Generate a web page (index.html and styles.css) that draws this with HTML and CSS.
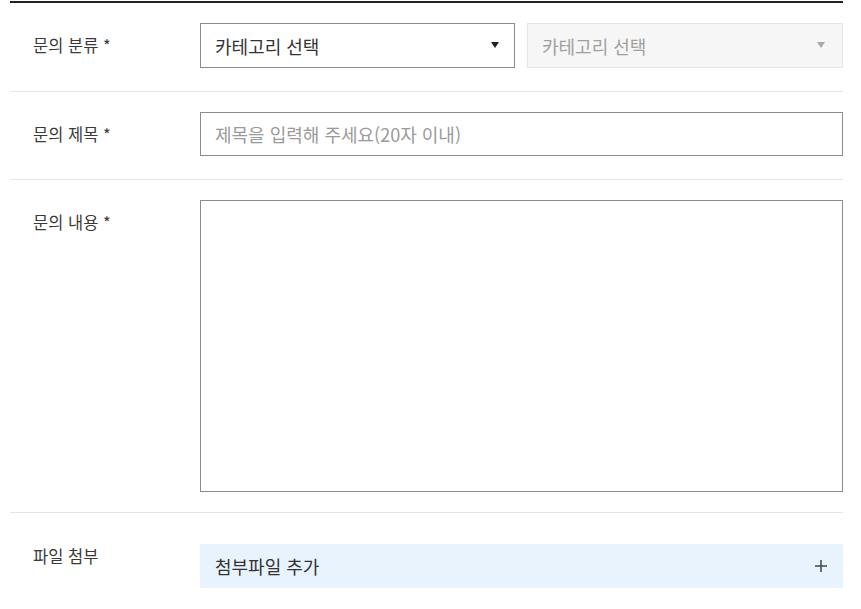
FILE: index.html
```html
<!DOCTYPE html>
<html lang="ko">
<head>
    <meta charset="UTF-8">
    <meta name="viewport" content="width=device-width, initial-scale=1.0">
    <title>1:1 문의</title>
    <link rel="stylesheet" href="styles.css">
</head>
<body>
    <form class="inquiry-form">
        <div class="form-row">
            <label class="form-label">문의 분류 *</label>
            <div class="form-field select-pair">
                <div class="select-box">
                    <select class="select">
                        <option>카테고리 선택</option>
                    </select>
                    <span class="select-arrow"></span>
                </div>
                <div class="select-box is-disabled">
                    <select class="select" disabled>
                        <option>카테고리 선택</option>
                    </select>
                    <span class="select-arrow"></span>
                </div>
            </div>
        </div>

        <div class="form-row">
            <label class="form-label">문의 제목 *</label>
            <div class="form-field">
                <input class="text-input" type="text" placeholder="제목을 입력해 주세요(20자 이내)">
            </div>
        </div>

        <div class="form-row form-row--content">
            <label class="form-label">문의 내용 *</label>
            <div class="form-field">
                <textarea class="textarea"></textarea>
            </div>
        </div>

        <div class="form-row form-row--file">
            <label class="form-label">파일 첨부</label>
            <div class="form-field">
                <button type="button" class="file-add">
                    <span>첨부파일 추가</span>
                    <svg class="plus-icon" width="12" height="12" viewBox="0 0 12 12">
                        <path d="M6 0v12M0 6h12" stroke="#444" stroke-width="1.5" fill="none"/>
                    </svg>
                </button>
            </div>
        </div>
    </form>
</body>
</html>
```

FILE: styles.css
```css
* {
    box-sizing: border-box;
}
body {
    margin: 0;
    background: #fff;
    font-family: "Noto Sans CJK KR", "Noto Sans", sans-serif;
    color: #222;
}
.inquiry-form {
    margin: 1px 18px 0 10px;
    border-top: 2px solid #222;
}
.form-row {
    display: grid;
    grid-template-columns: 190px 1fr;
    padding: 20px 0 23px;
    border-bottom: 1px solid #e6e6e6;
}
.form-row--content {
    padding-bottom: 20px;
}
.form-row--file {
    border-bottom: none;
    padding-top: 31px;
}
.form-label {
    padding-left: 23px;
    font-size: 16.5px;
    line-height: 44px;
    color: #3a3a3a;
}
.form-row--file .form-label {
    line-height: 24px;
}
.select-pair {
    display: grid;
    grid-template-columns: 315px 1fr;
    gap: 12px;
}
.select-box {
    position: relative;
}
.select {
    width: 100%;
    height: 45px;
    padding: 0 40px 0 14px;
    border: 1px solid #8c8c8c;
    background: #fff;
    font-family: inherit;
    font-size: 18px;
    color: #333;
    appearance: none;
    -webkit-appearance: none;
    border-radius: 0;
    outline: none;
}
.select-arrow {
    position: absolute;
    top: 19px;
    right: 16px;
    width: 0;
    height: 0;
    border-left: 4px solid transparent;
    border-right: 4px solid transparent;
    border-top: 6px solid #222;
    pointer-events: none;
}
.is-disabled .select {
    background: #f6f6f6;
    border-color: #e6e6e6;
    color: #a0a0a0;
    opacity: 1;
}
.is-disabled .select-arrow {
    border-top-color: #aaa;
    right: 18px;
}
.text-input {
    display: block;
    width: 100%;
    height: 44px;
    padding: 0 14px;
    border: 1px solid #8c8c8c;
    font-family: inherit;
    font-size: 18px;
    color: #222;
    border-radius: 0;
    outline: none;
}
.text-input::placeholder {
    color: #9a9a9a;
}
.textarea {
    display: block;
    width: 100%;
    height: 292px;
    border: 1px solid #8c8c8c;
    padding: 12px 14px;
    font-family: inherit;
    font-size: 18px;
    resize: none;
    border-radius: 0;
    outline: none;
}
.file-add {
    display: flex;
    align-items: center;
    justify-content: space-between;
    width: 100%;
    height: 44px;
    padding: 0 16px 0 15px;
    border: none;
    background: #e8f3fd;
    font-family: inherit;
    font-size: 18px;
    color: #333;
    cursor: pointer;
    text-align: left;
}
```
